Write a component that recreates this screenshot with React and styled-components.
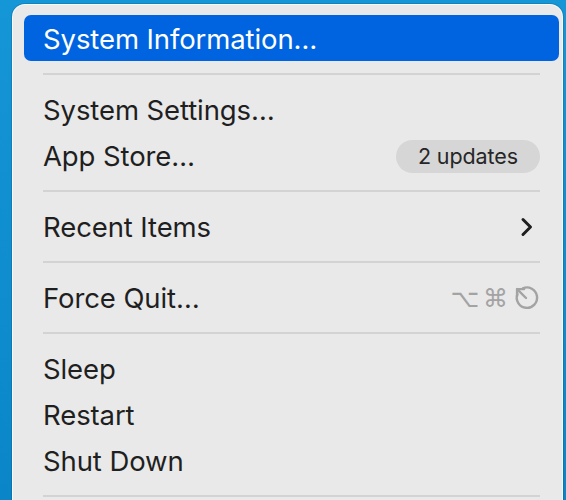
import React from "react";
import styled, { createGlobalStyle } from "styled-components";

const GlobalStyle = createGlobalStyle`
  html, body {
    margin: 0;
    padding: 0;
    background: #0c8bd0;
  }
  body {
    font-family: "Inter", "Liberation Sans", sans-serif;
  }
`;

const Desktop = styled.div`
  width: 566px;
  height: 500px;
  overflow: hidden;
  background: linear-gradient(180deg, #1596d6 0%, #0a86c8 100%);
  padding: 4px 3px 0 12px;
  box-sizing: border-box;
`;

const Menu = styled.div`
  box-sizing: border-box;
  height: 520px;
  background: #e9e9e9;
  border-radius: 13px;
  border: 1px solid rgba(255, 255, 255, 0.7);
  box-shadow: 0 0 0 1px rgba(0, 0, 0, 0.12);
  padding: 10px 3px 0 11px;
  display: flex;
  flex-direction: column;
`;

const Item = styled.div`
  height: 46px;
  display: flex;
  align-items: center;
  justify-content: space-between;
  padding: 2px 19px 0;
  box-sizing: border-box;
  border-radius: 7px;
  font-size: 27.5px;
  letter-spacing: -0.1px;
  color: ${(p) => (p.$active ? "#ffffff" : "#1f1f1f")};
  background: ${(p) => (p.$active ? "#0064e1" : "transparent")};
`;

const Separator = styled.div`
  height: 2px;
  background: #d3d3d3;
  margin: 12px 19px 11px;
`;

const Badge = styled.span`
  background: #d6d6d6;
  color: #262626;
  border-radius: 17px;
  height: 33px;
  padding: 0 22px;
  display: flex;
  align-items: center;
  font-size: 21.5px;
`;

const Shortcut = styled.span`
  display: flex;
  align-items: center;
  gap: 4px;
  color: #a3a3a3;
  font-family: "DejaVu Sans", sans-serif;
  font-size: 25px;
`;

const Chevron = () => (
  <svg width="14" height="20" viewBox="0 0 14 20" style={{ marginRight: 6 }}>
    <path d="M3 2.5 L10.5 10 L3 17.5" fill="none" stroke="#1f1f1f" strokeWidth="3" strokeLinecap="round" strokeLinejoin="round" />
  </svg>
);

const EscapeGlyph = () => (
  <svg width="28" height="28" viewBox="0 0 22 22">
    <path
      d="M4.2 8 A8 8 0 1 0 8.5 3.4"
      fill="none"
      stroke="#a3a3a3"
      strokeWidth="1.9"
      strokeLinecap="round"
    />
    <path d="M11 11 L4 4" stroke="#a3a3a3" strokeWidth="1.9" strokeLinecap="round" />
    <path d="M4 9.5 L4 4 L9.5 4" fill="none" stroke="#a3a3a3" strokeWidth="1.9" strokeLinecap="round" strokeLinejoin="round" />
  </svg>
);

export default function App() {
  return (
    <>
      <GlobalStyle />
      <Desktop>
        <Menu>
          <Item $active>System Information…</Item>
          <Separator />
          <Item>System Settings…</Item>
          <Item>
            App Store…
            <Badge>2 updates</Badge>
          </Item>
          <Separator />
          <Item>
            Recent Items
            <Chevron />
          </Item>
          <Separator />
          <Item>
            Force Quit…
            <Shortcut>
              <span>⌥</span>
              <span>⌘</span>
              <EscapeGlyph />
            </Shortcut>
          </Item>
          <Separator />
          <Item>Sleep</Item>
          <Item>Restart</Item>
          <Item>Shut Down</Item>
          <Separator />
        </Menu>
      </Desktop>
    </>
  );
}
